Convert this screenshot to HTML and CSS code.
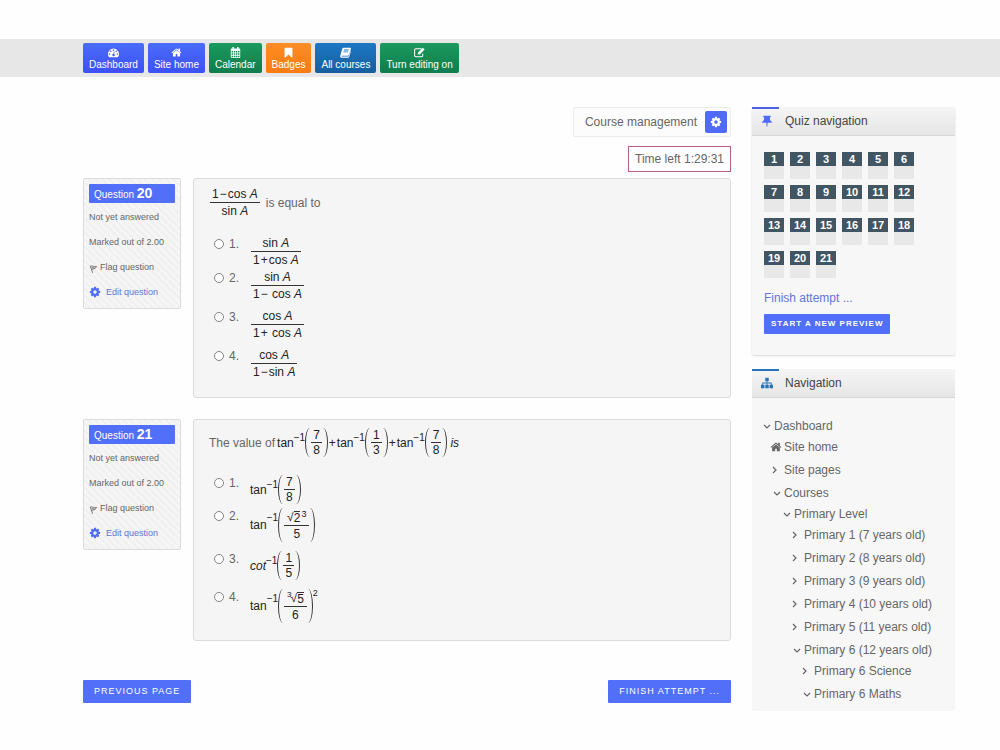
FILE: index.html
```html
<!DOCTYPE html>
<html lang="en">
<head>
  <meta charset="UTF-8" />
  <meta name="viewport" content="width=device-width, initial-scale=1.0"/>
  <title>Quiz - Attempt</title>
  <link rel="stylesheet" href="styles.css">
</head>
<body>
  <!-- shared icons -->
  <svg class="sprite" aria-hidden="true">
    <symbol id="i-home" viewBox="0 0 1792 1792"><path d="M1472 992v480q0 26-19 45t-45 19h-384v-384h-256v384h-384q-26 0-45-19t-19-45v-480q0-1 .5-3t.5-3l575-474 575 474q1 2 1 6zm223-69l-62 74q-8 9-21 11h-3q-13 0-21-7l-692-577-692 577q-12 8-24 7-13-2-21-11l-62-74q-8-10-7-23.5t11-21.5l719-599q32-26 76-26t76 26l244 204v-195q0-14 9-23t23-9h192q14 0 23 9t9 23v408l219 182q10 8 11 21.5t-7 23.5z"/></symbol>
    <symbol id="i-cog" viewBox="0 0 1792 1792"><path d="M1152 896q0-106-75-181t-181-75-181 75-75 181 75 181 181 75 181-75 75-181zm512-109v222q0 12-8 23t-20 13l-185 28q-19 54-39 91 35 50 107 138 10 12 10 25t-9 23q-27 37-99 108t-94 71q-12 0-26-9l-138-108q-44 23-91 38-16 136-29 186-7 28-36 28h-222q-14 0-24.5-8.5t-11.5-21.5l-28-184q-49-16-90-37l-141 107q-10 9-25 9-14 0-25-11-126-114-165-168-7-10-7-23 0-12 8-23 15-21 51-66.5t54-70.5q-27-50-41-99l-183-27q-13-2-21-12.5t-8-23.5v-222q0-12 8-23t19-13l186-28q14-46 39-92-40-57-107-138-10-12-10-24 0-10 9-23 26-36 98.5-107.5t94.5-71.5q13 0 26 10l138 107q44-23 91-38 16-136 29-186 7-28 36-28h222q14 0 24.5 8.5t11.5 21.5l28 184q49 16 90 37l142-107q9-9 24-9 13 0 25 10 129 119 165 170 7 8 7 22 0 12-8 23-15 21-51 66.5t-54 70.5q26 50 41 98l183 28q13 2 21 12.5t8 23.5z"/></symbol>
    <symbol id="i-gauge" viewBox="0 0 14 14"><path fill-rule="evenodd" d="M7 2a7 7 0 0 0-5.9 10.7c.1.2.3.3.5.3h10.8c.2 0 .4-.1.5-.3A7 7 0 0 0 7 2zM7 3a1 1 0 1 1 0 2 1 1 0 0 1 0-2zM3.500 4.500a1 1 0 1 1 0 2 1 1 0 0 1 0-2zM10.500 4.500a1 1 0 1 1 0 2 1 1 0 0 1 0-2zM2 8a1 1 0 1 1 0 2 1 1 0 0 1 0-2zM12 8a1 1 0 1 1 0 2 1 1 0 0 1 0-2zM7.600 5.800l.9.2-.7 2.900a1.500 1.500 0 1 1-.9-.2z"/></symbol>
    <symbol id="i-calendar" viewBox="0 0 14 14"><path fill-rule="evenodd" d="M3 0h2v2h4V0h2v2h1.500l.5.5v11l-.5.5h-11l-.5-.5v-11l.5-.5H3zM2 5v2h2V5zm3 0v2h1.700V5zm2.500 0v2h1.700V5zM10 5v2h2V5zM2 8v2h2V8zm3 0v2h1.700V8zm2.500 0v2h1.700V8zM10 8v2h2V8zM2 11v2h2v-2zm3 0v2h1.700v-2zm2.500 0v2h1.700v-2zm2.500 0v2h2v-2z"/></symbol>
    <symbol id="i-bookmark" viewBox="0 0 14 14"><path d="M2.500 1h9l.5.5V13l-1 .3-4-3.800-4 3.800-1-.3V1.500z"/></symbol>
    <symbol id="i-book" viewBox="0 0 14 14"><path fill-rule="evenodd" d="M4.500 1h8.300c.9 0 1.200.6 1 1.300l-2.400 7.900c-.2.600-.7.900-1.400.900H2.500c-.9 0-.9 1 0 1h8.200c.4 0 .6-.2.700-.5l2.300-7.300c.4.3.4.7.3 1.100l-2.200 7.100c-.2.800-.8 1.200-1.500 1.200H2.200C.8 13.700-.2 12.200.3 11L2.900 2.300C3.100 1.500 3.700 1 4.500 1zM5.200 3.300l-.3 1h5.800l.3-1zM4.500 5.600l-.3 1H10l.3-1z"/></symbol>
    <symbol id="i-edit" viewBox="0 0 14 14"><path fill="none" stroke="currentColor" stroke-width="1.300" d="M9.500 2.200H2.400c-.9 0-1.600.7-1.600 1.600v7.100c0 .9.7 1.600 1.600 1.600h7.100c.9 0 1.600-.7 1.600-1.600V8.500"/><path d="M5 7.300L11.200 1l2.300 2.300L7.300 9.500H5z"/></symbol>
    <symbol id="i-pin" viewBox="0 0 14 14"><path d="M3 1h8c.9.400.5 1.600-.5 1.700v3.500c1.400.5 2.200 1.400 2.200 2.700H7.800L7.300 14h-.6l-.5-5.100H1.300c0-1.300.8-2.200 2.200-2.700V2.700C2.500 2.600 2.100 1.400 3 1z"/></symbol>
    <symbol id="i-sitemap" viewBox="0 0 14 14"><path d="M5 1h4v4H7.500v1.500h5V9H14v4h-4V9h1.500V7.500h-4V9H9v4H5V9h1.500V7.500h-4V9H4v4H0V9h1.500V6.500h5V5H5z"/></symbol>
    <symbol id="i-flag" viewBox="0 0 10 14"><path fill="none" stroke="currentColor" d="M1.500 6c2-1 3.500 1.300 7 .5-1 1.500-2 2.500-5 3M1.500 6L4 13.500M3 8h3"/></symbol>
    <symbol id="i-right" viewBox="0 0 14 14"><path fill="none" stroke="currentColor" stroke-width="1.200" d="M3 4l3 3-3 3"/></symbol>
    <symbol id="i-down" viewBox="0 0 14 14"><path fill="none" stroke="currentColor" stroke-width="1.200" d="M4 6l3 3 3-3"/></symbol>
  </svg>

  <nav class="topbar">
    <a href="#" class="top-link blue"><svg><use href="#i-gauge"/></svg>Dashboard</a>
    <a href="#" class="top-link blue"><svg><use href="#i-home"/></svg>Site home</a>
    <a href="#" class="top-link green"><svg><use href="#i-calendar"/></svg>Calendar</a>
    <a href="#" class="top-link orange"><svg><use href="#i-bookmark"/></svg>Badges</a>
    <a href="#" class="top-link navy"><svg><use href="#i-book"/></svg>All courses</a>
    <a href="#" class="top-link green"><svg><use href="#i-edit"/></svg>Turn editing on</a>
  </nav>

  <div class="page">
    <main class="main">
      <div class="course-menu">
        <span>Course management</span>
        <button type="button" class="cog-btn" aria-label="Course management"><svg><use href="#i-cog"/></svg></button>
      </div>
      <div class="timer">Time left 1:29:31</div>

      <form class="quiz">
        <section class="question">
          <div class="info">
            <h3>Question <b>20</b></h3>
            <p>Not yet answered</p>
            <p>Marked out of 2.00</p>
            <p><a href="#" class="flag"><svg><use href="#i-flag"/></svg>Flag question</a></p>
            <p><a href="#" class="edit"><svg><use href="#i-cog"/></svg>Edit question</a></p>
          </div>
          <div class="content">
            <div class="qtext">
              <span class="math"><span class="frac"><span>1<i class="op">−</i>cos <em>A</em></span><span>sin <em>A</em></span></span></span>
              <span>is equal to</span>
            </div>
            <ul class="answers">
              <li>
                <input type="radio" name="q20" id="q20a"><label for="q20a"><span class="num">1.</span>
                <span class="math"><span class="frac"><span>sin <em>A</em></span><span>1<i class="op">+</i>cos <em>A</em></span></span></span></label>
              </li>
              <li>
                <input type="radio" name="q20" id="q20b"><label for="q20b"><span class="num">2.</span>
                <span class="math"><span class="frac"><span>sin <em>A</em></span><span>1<i class="op">−</i> cos <em>A</em></span></span></span></label>
              </li>
              <li>
                <input type="radio" name="q20" id="q20c"><label for="q20c"><span class="num">3.</span>
                <span class="math"><span class="frac"><span>cos <em>A</em></span><span>1<i class="op">+</i> cos <em>A</em></span></span></span></label>
              </li>
              <li>
                <input type="radio" name="q20" id="q20d"><label for="q20d"><span class="num">4.</span>
                <span class="math"><span class="frac"><span>cos <em>A</em></span><span>1<i class="op">−</i>sin <em>A</em></span></span></span></label>
              </li>
            </ul>
          </div>
        </section>

        <section class="question">
          <div class="info">
            <h3>Question <b>21</b></h3>
            <p>Not yet answered</p>
            <p>Marked out of 2.00</p>
            <p><a href="#" class="flag"><svg><use href="#i-flag"/></svg>Flag question</a></p>
            <p><a href="#" class="edit"><svg><use href="#i-cog"/></svg>Edit question</a></p>
          </div>
          <div class="content">
            <div class="qtext inline">
              <span>The value of</span>
              <span class="math">tan<sup>−1</sup><span class="paren"><span class="frac small"><span>7</span><span>8</span></span></span><i class="op">+</i>tan<sup>−1</sup><span class="paren"><span class="frac small"><span>1</span><span>3</span></span></span><i class="op">+</i>tan<sup>−1</sup><span class="paren"><span class="frac small"><span>7</span><span>8</span></span></span><em class="is">is</em></span>
            </div>
            <ul class="answers spaced">
              <li>
                <input type="radio" name="q21" id="q21a"><label for="q21a"><span class="num">1.</span>
                <span class="math">tan<sup>−1</sup><span class="paren"><span class="frac small"><span>7</span><span>8</span></span></span></span></label>
              </li>
              <li>
                <input type="radio" name="q21" id="q21b"><label for="q21b"><span class="num">2.</span>
                <span class="math">tan<sup>−1</sup><span class="paren"><span class="frac"><span class="root">√<span>2</span><sup class="power">3</sup></span><span>5</span></span></span></span></label>
              </li>
              <li>
                <input type="radio" name="q21" id="q21c"><label for="q21c"><span class="num">3.</span>
                <span class="math"><em>cot</em><sup>−1</sup><span class="paren"><span class="frac small"><span>1</span><span>5</span></span></span></span></label>
              </li>
              <li>
                <input type="radio" name="q21" id="q21d"><label for="q21d"><span class="num">4.</span>
                <span class="math">tan<sup>−1</sup><span class="paren"><span class="frac"><span class="root"><sup class="degree">3</sup>√<span>5</span></span><span>6</span></span></span><sup class="outer">2</sup></span></label>
              </li>
            </ul>
          </div>
        </section>

        <div class="pager">
          <button type="button" class="btn">PREVIOUS PAGE</button>
          <button type="button" class="btn">FINISH ATTEMPT ...</button>
        </div>
      </form>
    </main>

    <aside class="sidebar">
      <section class="block">
        <h2><svg><use href="#i-pin"/></svg>Quiz navigation</h2>
        <div class="block-body">
          <div class="qn-buttons">
            <a href="#">1</a><a href="#">2</a><a href="#">3</a><a href="#">4</a><a href="#">5</a><a href="#">6</a>
            <a href="#">7</a><a href="#">8</a><a href="#">9</a><a href="#">10</a><a href="#">11</a><a href="#">12</a>
            <a href="#">13</a><a href="#">14</a><a href="#">15</a><a href="#">16</a><a href="#">17</a><a href="#">18</a>
            <a href="#">19</a><a href="#">20</a><a href="#">21</a>
          </div>
          <a href="#" class="finish">Finish attempt ...</a>
          <button type="button" class="btn btn-small">START A NEW PREVIEW</button>
        </div>
      </section>

      <section class="block nav-block">
        <h2><svg><use href="#i-sitemap"/></svg>Navigation</h2>
        <ul class="tree">
          <li><a href="#"><svg><use href="#i-down"/></svg>Dashboard</a>
            <ul>
              <li><a href="#"><svg class="home"><use href="#i-home"/></svg>Site home</a></li>
              <li><a href="#"><svg><use href="#i-right"/></svg>Site pages</a></li>
              <li><a href="#"><svg><use href="#i-down"/></svg>Courses</a>
                <ul>
                  <li><a href="#"><svg><use href="#i-down"/></svg>Primary Level</a>
                    <ul>
                      <li><a href="#"><svg><use href="#i-right"/></svg>Primary 1 (7 years old)</a></li>
                      <li><a href="#"><svg><use href="#i-right"/></svg>Primary 2 (8 years old)</a></li>
                      <li><a href="#"><svg><use href="#i-right"/></svg>Primary 3 (9 years old)</a></li>
                      <li><a href="#"><svg><use href="#i-right"/></svg>Primary 4 (10 years old)</a></li>
                      <li><a href="#"><svg><use href="#i-right"/></svg>Primary 5 (11 years old)</a></li>
                      <li><a href="#"><svg><use href="#i-down"/></svg>Primary 6 (12 years old)</a>
                        <ul>
                          <li><a href="#"><svg><use href="#i-right"/></svg>Primary 6 Science</a></li>
                          <li><a href="#"><svg><use href="#i-down"/></svg>Primary 6 Maths</a></li>
                        </ul>
                      </li>
                    </ul>
                  </li>
                </ul>
              </li>
            </ul>
          </li>
        </ul>
      </section>
    </aside>
  </div>
</body>
</html>
```

FILE: styles.css
```css
* {
  margin: 0;
  padding: 0;
  box-sizing: border-box;
}

body {
  display: flex;
  flex-direction: column;
  min-height: 100vh;
  padding: 39px 0;
  background-color: #fefefe;
  color: #666;
  font-family: "Liberation Sans", Arial, sans-serif;
  font-size: 12px;
  line-height: 16px;
}

a {
  color: inherit;
  text-decoration: none;
}

ul {
  list-style: none;
}

svg {
  fill: currentColor;
  flex: none;
}

button {
  font-family: inherit;
  border: none;
  cursor: pointer;
}

.sprite {
  display: none;
}

/* top bar */
.topbar {
  display: flex;
  gap: 4px;
  padding: 4px 45px 4px 83px;
  background-color: #e7e7e7;
}

.top-link {
  display: flex;
  flex-direction: column;
  align-items: center;
  padding: 4px 6px 2px;
  border-radius: 2px;
  color: #fff;
  font-size: 10px;
  line-height: 13px;
}

.top-link svg {
  width: 11px;
  height: 11px;
}

.blue {
  background: linear-gradient(#4a6cf8, #3d50fa);
}

.green {
  background: linear-gradient(#1b9a5e, #0f7c4b);
}

.orange {
  background: linear-gradient(#fb8d25, #fa7c10);
}

.navy {
  background: linear-gradient(#1d78c4, #165f9f);
}

/* layout */
.page {
  flex: 1;
  display: grid;
  grid-template-columns: 1fr 203px;
  gap: 21px;
  padding: 30px 45px 0 83px;
}

.main {
  display: flex;
  flex-direction: column;
  align-items: flex-end;
}

.course-menu {
  display: flex;
  align-items: center;
  gap: 8px;
  padding: 3px 3px 3px 11px;
  border: 1px solid #ececec;
  border-radius: 2px;
  background-color: #fcfcfc;
}

.cog-btn {
  display: flex;
  align-items: center;
  justify-content: center;
  width: 22px;
  height: 22px;
  border-radius: 2px;
  background-color: #4f6bf8;
  color: #fff;
}

.cog-btn svg {
  width: 12px;
  height: 12px;
}

.timer {
  margin-top: 9px;
  padding: 4px 6px;
  border: 1px solid #b9607a;
  background-color: #fff;
}

.quiz {
  width: 100%;
  margin-top: 6px;
}

/* questions */
.question {
  display: flex;
  align-items: flex-start;
  gap: 12px;
  margin-bottom: 21px;
}

.info {
  width: 98px;
  flex: none;
  padding: 5px 5px 8px;
  border: 1px solid #dcdcdc;
  border-radius: 2px;
  background: repeating-linear-gradient(45deg, #f5f5f5 0 3px, #f0f0f0 3px 5px);
  font-size: 9px;
}

.info h3 {
  margin-bottom: 6px;
  padding: 2px 5px 0;
  border-radius: 1px;
  background-color: #526ffa;
  color: #fff;
  font-size: 10px;
  font-weight: normal;
  line-height: 16px;
}

.info h3 b {
  font-size: 14px;
  line-height: 14px;
}

.info p {
  margin-bottom: 9px;
}

.info p:last-child {
  margin-bottom: 0;
}

.info a {
  display: flex;
  align-items: center;
}

.flag svg {
  width: 9px;
  height: 14px;
  margin-right: 2px;
}

.edit {
  color: #6472dc;
}

.edit svg {
  width: 12px;
  height: 12px;
  margin-right: 5px;
  color: #4f6bf8;
}

.content {
  flex: 1;
  padding: 8px 15px 17px;
  border: 1px solid #dcdcdc;
  border-radius: 3px;
  background-color: #f5f5f5;
}

.qtext {
  display: flex;
  align-items: center;
  gap: 5px;
  margin-bottom: 17px;
}

.qtext.inline {
  gap: 2px;
  margin-bottom: 18px;
}

.answers li {
  display: flex;
  align-items: flex-start;
  margin-bottom: 7px;
}

.answers li:first-child {
  margin-bottom: 2px;
}

.answers.spaced li {
  margin-bottom: 9px;
}

.answers.spaced li:first-child {
  margin-bottom: 4px;
}

.answers li:last-child,
.answers.spaced li:last-child {
  margin-bottom: 0;
}

.answers input {
  appearance: none;
  width: 10px;
  height: 10px;
  margin: 3px 5px 0;
  border: 1px solid #858585;
  border-radius: 50%;
  background-color: #fff;
}

.answers input:checked {
  background-color: #4f6bf8;
}

.answers label {
  display: flex;
}

.num {
  width: 21px;
}

/* formulas */
.math {
  display: flex;
  align-items: center;
  color: #222;
  white-space: pre;
}

.op {
  margin: 0 1px;
  font-style: normal;
}

.math sup {
  align-self: flex-start;
  padding-top: 4px;
  font-size: 10px;
  line-height: 12px;
}

.frac {
  display: flex;
  flex-direction: column;
  padding: 0 1px;
  text-align: center;
}

.frac > span {
  padding: 0 2px;
  line-height: 16px;
}

.frac > span:first-child {
  border-bottom: 1px solid #333;
  line-height: 15px;
}

.frac.small > span {
  line-height: 14px;
}

.paren {
  display: flex;
}

.paren::before,
.paren::after {
  content: "";
  width: 4px;
  border-left: 1px solid #333;
  border-radius: 100% 0 0 100% / 50%;
}

.paren::after {
  border-left: none;
  border-right: 1px solid #333;
  border-radius: 0 100% 100% 0 / 50%;
}

.frac > .root {
  display: flex;
  align-items: flex-end;
  padding: 2px 3px 0;
}

.root > span {
  border-top: 1px solid #333;
  line-height: 13px;
}

.math sup.power,
.math sup.degree,
.math sup.outer {
  padding-top: 0;
  font-size: 9px;
  line-height: 8px;
}

.math sup.power {
  margin-left: 1px;
}

.math sup.degree {
  margin-right: -1px;
  font-size: 8px;
}

.is {
  margin-left: 3px;
}

.pager {
  display: flex;
  justify-content: space-between;
  padding-top: 18px;
}

.btn {
  padding: 0 11px;
  border-radius: 1px;
  background-color: #526ffa;
  color: #fff;
  font-size: 9px;
  line-height: 23px;
  letter-spacing: 1px;
}

.btn-small {
  padding: 0 7px;
  font-size: 8px;
  font-weight: bold;
  line-height: 20px;
}

/* sidebar */
.sidebar {
  display: flex;
  flex-direction: column;
  gap: 14px;
}

.block {
  border-radius: 2px;
  background-color: #f7f7f7;
  box-shadow: 0 1px 2px rgba(0,0,0,0.15);
}

.block h2 {
  display: flex;
  align-items: center;
  gap: 12px;
  height: 29px;
  padding-left: 9px;
  border-bottom: 1px solid #d6d6d6;
  background: linear-gradient(#4f62e0, #4f62e0) 0 0 / 27px 2px no-repeat, linear-gradient(#f5f5f5, #e6e6e6);
  color: #444;
  font-size: 12px;
  font-weight: normal;
}

.block h2 svg {
  width: 12px;
  height: 12px;
  color: #4f6bf8;
}

.block-body {
  padding: 16px 12px 21px;
}

.qn-buttons {
  display: grid;
  grid-template-columns: repeat(6, 20px);
  gap: 6px;
}

.qn-buttons a {
  height: 27px;
  background: linear-gradient(#425563 14px, #e8e8e8 14px);
  color: #fff;
  font-size: 11px;
  font-weight: bold;
  line-height: 14px;
  text-align: center;
}

.finish {
  display: block;
  margin: 12px 0 8px;
  color: #6473dc;
}

.nav-block {
  flex: 1;
  box-shadow: none;
}

.nav-block h2 {
  background: linear-gradient(#2673b8, #2673b8) 0 0 / 27px 2px no-repeat, linear-gradient(#f5f5f5, #e6e6e6);
}

.nav-block h2 svg {
  color: #2673b8;
}

.tree {
  padding: 20px 0 0 8px;
}

.tree ul {
  padding-left: 10px;
}

.tree ul li {
  margin-top: 7px;
}

.tree ul li:first-child {
  margin-top: 5px;
}

.tree a {
  display: flex;
  align-items: center;
}

.tree svg {
  width: 14px;
  height: 14px;
}

.tree svg.home {
  width: 12px;
  height: 12px;
  margin-right: 2px;
}
```
